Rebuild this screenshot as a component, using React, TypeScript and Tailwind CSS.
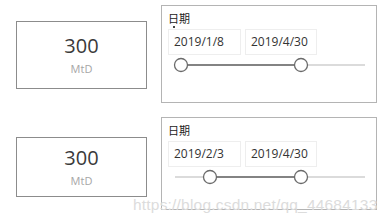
import React from 'react'

const sans = { fontFamily: '"Open Sans", "Noto Sans", "Noto Sans CJK SC", sans-serif' }

function Card({ height, top }: { height: string; top: string }) {
  return (
    <div className={`w-[131px] ${height} ${top} border border-[#8c8c8c] flex flex-col items-center justify-center`}>
      <p className="text-[20px] leading-[24px] text-[#3a3a3a]">300</p>
      <p className="text-[11px] leading-[14px] text-[#a6a6a6] mt-[4px]">MtD</p>
    </div>
  )
}

function Slicer({ from, left, height, dot }: { from: string; left: number; height: string; dot?: boolean }) {
  return (
    <div className={`w-[216px] ${height} border border-[#b4b4b4] px-[6px] pt-[5px]`}>
      <div className="relative">
        <p className="text-[11px] leading-[14px] text-[#222]" style={{ fontFamily: '"Noto Sans CJK SC", sans-serif' }}>日期</p>
        {dot && <span className="absolute left-[5px] top-[15px] w-[2px] h-[2px] bg-[#444]" />}
      </div>
      <div className="flex gap-[4px] mt-[4px]">
        <div className="w-[73px] h-[26px] border border-[#eeeeee] flex items-center pl-[5px] text-[12px] text-[#333]">{from}</div>
        <div className="w-[72px] h-[26px] border border-[#eeeeee] flex items-center pl-[5px] text-[12px] text-[#333]">2019/4/30</div>
      </div>
      <svg width="204" height="18" className="mt-[1px]">
        <line x1="7" y1="9" x2="197" y2="9" stroke="#cfcfcf" strokeWidth="1.5" />
        <line x1={left} y1="9" x2="133" y2="9" stroke="#666" strokeWidth="1.5" />
        <circle cx={left} cy="9" r="6.5" fill="#fff" stroke="#6a6a6a" strokeWidth="1.3" />
        <circle cx="133" cy="9" r="6.5" fill="#fff" stroke="#6a6a6a" strokeWidth="1.3" />
      </svg>
    </div>
  )
}

export default function App() {
  return (
    <div className="relative w-[384px] h-[222px] bg-white overflow-hidden" style={sans}>
      <div className="flex items-start gap-[14px] pl-[16px] pt-[5px]">
        <Card height="h-[68px]" top="mt-[16px]" />
        <Slicer from="2019/1/8" left={13} height="h-[98px]" dot />
      </div>
      <div className="flex items-start gap-[14px] pl-[16px] mt-[14px]">
        <Card height="h-[60px]" top="mt-[20px]" />
        <Slicer from="2019/2/3" left={42} height="h-[93px]" />
      </div>
      <p
        className="absolute left-[133px] top-[196px] text-[15.5px] leading-[17px] tracking-[0.2px] text-[#dcdcdc] whitespace-nowrap"
        style={{ fontFamily: '"Liberation Sans", Arial, sans-serif' }}
      >
        https://blog.csdn.net/qq_44684133
      </p>
    </div>
  )
}
